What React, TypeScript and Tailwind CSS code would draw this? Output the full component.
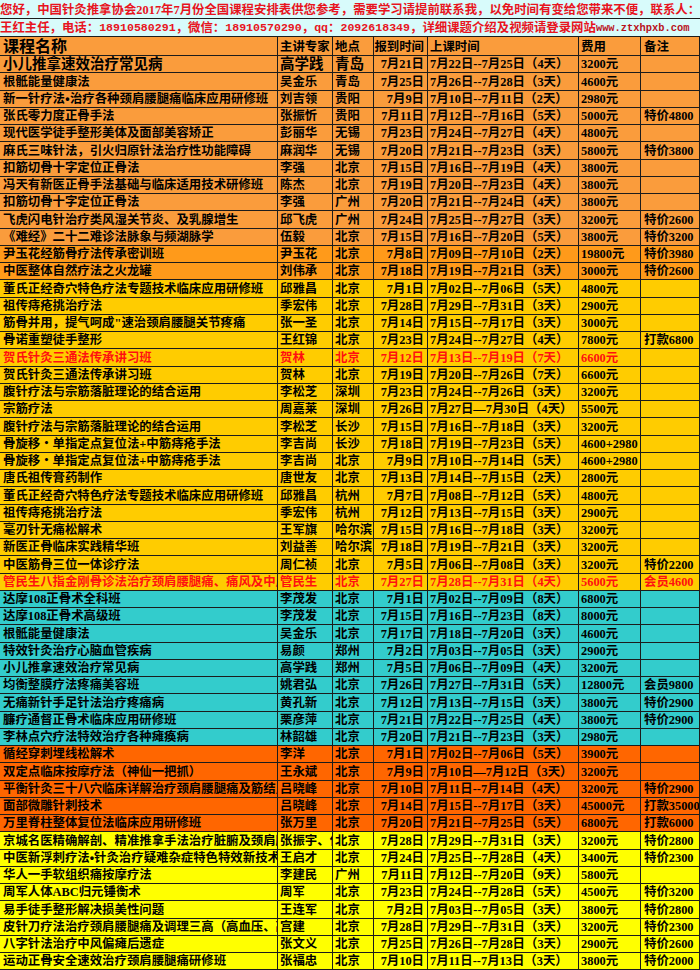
import React from 'react';

// [课程名称, 主讲专家, 地点, 报到时间, 上课时间, 费用, 备注, 红字]
type Row = [string, string, string, string, string, string, string, boolean?];

interface Section {
  bg: string;
  rows: Row[];
}

const sections: Section[] = [
  {
    bg: 'bg-[#fa9c3c]',
    rows: [
      ['小儿推拿速效治疗常见病', '高学践', '青岛', '7月21日', '7月22日--7月25日（4天）', '3200元', ''],
      ['根骶能量健康法', '吴金乐', '青岛', '7月25日', '7月26日--7月28日（3天）', '4600元', ''],
      ['新一针疗法•治疗各种颈肩腰腿痛临床应用研修班', '刘吉领', '贵阳', '7月9日', '7月10日--7月11日（2天）', '2980元', ''],
      ['张氏零力度正骨手法', '张振忻', '贵阳', '7月11日', '7月12日--7月16日（5天）', '5000元', '特价4800'],
      ['现代医学徒手整形美体及面部美容矫正', '彭丽华', '无锡', '7月23日', '7月24日--7月27日（4天）', '4800元', ''],
      ['麻氏三味针法，引火归原针法治疗性功能障碍', '麻润华', '无锡', '7月20日', '7月21日--7月23日（3天）', '5800元', '特价3800'],
      ['扣筋切骨十字定位正骨法', '李强', '北京', '7月15日', '7月16日--7月19日（4天）', '3800元', ''],
      ['冯天有新医正骨手法基础与临床适用技术研修班', '陈杰', '北京', '7月19日', '7月20日--7月23日（4天）', '3800元', ''],
      ['扣筋切骨十字定位正骨法', '李强', '广州', '7月20日', '7月21日--7月24日（4天）', '3800元', ''],
      ['飞虎闪电针治疗类风湿关节炎、及乳腺增生', '邱飞虎', '广州', '7月24日', '7月25日--7月27日（3天）', '3200元', '特价2600'],
      ['《难经》二十二难诊法脉象与频湖脉学', '伍毅', '北京', '7月15日', '7月16日--7月20日（5天）', '3800元', '特价3200'],
    ],
  },
  {
    bg: 'bg-[#ff9a1a]',
    rows: [
      ['尹玉花经筋骨疗法传承密训班', '尹玉花', '北京', '7月8日', '7月09日--7月10日（2天）', '19800元', '特价3980'],
      ['中医整体自然疗法之火龙罐', '刘伟承', '北京', '7月18日', '7月19日--7月21日（3天）', '3000元', '特价2600'],
    ],
  },
  {
    bg: 'bg-[#ffcc00]',
    rows: [
      ['董氏正经奇穴特色疗法专题技术临床应用研修班', '邱雅昌', '北京', '7月1日', '7月02日--7月06日（5天）', '4800元', ''],
      ['祖传痔疮挑治疗法', '季宏伟', '北京', '7月28日', '7月29日--7月31日（3天）', '2900元', ''],
      ['筋骨并用，提气呵成"速治颈肩腰腿关节疼痛', '张一圣', '北京', '7月14日', '7月15日--7月17日（3天）', '3000元', ''],
      ['骨诺重塑徒手整形', '王红锦', '北京', '7月23日', '7月24日--7月27日（4天）', '7800元', '打款6800'],
      ['贺氏针灸三通法传承讲习班', '贺林', '北京', '7月12日', '7月13日--7月19日（7天）', '6600元', '', true],
      ['贺氏针灸三通法传承讲习班', '贺林', '北京', '7月19日', '7月20日--7月26日（7天）', '6600元', ''],
      ['腹针疗法与宗筋落脏理论的结合运用', '李松芝', '深圳', '7月23日', '7月24日--7月26日（3天）', '3200元', ''],
      ['宗筋疗法', '周嘉莱', '深圳', '7月26日', '7月27日—7月30日（4天）', '5500元', ''],
      ['腹针疗法与宗筋落脏理论的结合运用', '李松芝', '长沙', '7月15日', '7月16日--7月18日（3天）', '3200元', ''],
      ['骨旋移・单指定点复位法+中筋痔疮手法', '李吉尚', '长沙', '7月18日', '7月19日--7月23日（5天）', '4600+2980', ''],
      ['骨旋移・单指定点复位法+中筋痔疮手法', '李吉尚', '北京', '7月9日', '7月10日--7月14日（5天）', '4600+2980', ''],
      ['唐氏祖传膏药制作', '唐世友', '北京', '7月13日', '7月14日--7月15日（2天）', '2800元', ''],
      ['董氏正经奇穴特色疗法专题技术临床应用研修班', '邱雅昌', '杭州', '7月7日', '7月08日--7月12日（5天）', '4800元', ''],
      ['祖传痔疮挑治疗法', '季宏伟', '杭州', '7月12日', '7月13日--7月15日（3天）', '2900元', ''],
      ['毫刃针无痛松解术', '王军旗', '哈尔滨', '7月15日', '7月16日--7月18日（3天）', '3200元', ''],
      ['新医正骨临床实践精华班', '刘益善', '哈尔滨', '7月18日', '7月19日--7月21日（3天）', '3200元', ''],
      ['中医筋骨三位一体诊疗法', '周仁祯', '北京', '7月5日', '7月06日--7月08日（3天）', '3200元', '特价2200'],
      ['管民生八指金刚骨诊法治疗颈肩腰腿痛、痛风及中风', '管民生', '北京', '7月27日', '7月28日--7月31日（4天）', '5600元', '会员4600', true],
    ],
  },
  {
    bg: 'bg-[#33cccc]',
    rows: [
      ['达摩108正骨术全科班', '李茂发', '北京', '7月1日', '7月02日--7月09日（8天）', '6800元', ''],
      ['达摩108正骨术高级班', '李茂发', '北京', '7月15日', '7月16日--7月23日（8天）', '8000元', ''],
      ['根骶能量健康法', '吴金乐', '北京', '7月17日', '7月18日--7月20日（3天）', '4600元', ''],
      ['特效针灸治疗心脑血管疾病', '易颜', '郑州', '7月2日', '7月03日--7月05日（3天）', '2900元', ''],
      ['小儿推拿速效治疗常见病', '高学践', '郑州', '7月5日', '7月06日--7月09日（4天）', '3200元', ''],
      ['均衡整膜疗法疼痛美容班', '姚君弘', '北京', '7月26日', '7月27日--7月31日（5天）', '12800元', '会员9800'],
      ['无痛新针手足针法治疗疼痛病', '黄孔新', '北京', '7月12日', '7月13日--7月15日（3天）', '3800元', '特价2900'],
      ['臁疗通督正骨术临床应用研修班', '栗彦萍', '北京', '7月21日', '7月22日--7月25日（4天）', '3800元', '特价2900'],
      ['李林点穴疗法特效治疗各种瘫痪病', '林韶雄', '北京', '7月20日', '7月21日--7月23日（3天）', '2980元', ''],
    ],
  },
  {
    bg: 'bg-[#ff6600]',
    rows: [
      ['循经穿刺埋线松解术', '李洋', '北京', '7月1日', '7月02日--7月06日（5天）', '3900元', ''],
      ['双定点临床按摩疗法（神仙一把抓）', '王永斌', '北京', '7月9日', '7月10日—7月12日（3天）', '3200元', ''],
      ['平衡针灸三十八穴临床详解治疗颈肩腰腿痛及筋结点', '吕晓峰', '北京', '7月10日', '7月11日--7月14日（4天）', '3200元', '特价2900'],
      ['面部微雕针刺技术', '吕晓峰', '北京', '7月14日', '7月15日--7月17日（3天）', '45000元', '打款35000'],
      ['万里脊柱整体复位法临床应用研修班', '张万里', '北京', '7月20日', '7月21日--7月25日（5天）', '6800元', '打款6000'],
    ],
  },
  {
    bg: 'bg-[#ffff00]',
    rows: [
      ['京城名医精确解剖、精准推拿手法治疗脏腑及颈肩腰', '张振宇、付', '北京', '7月28日', '7月29日--7月31日（3天）', '3200元', '特价2800'],
      ['中医新浮刺疗法•针灸治疗疑难杂症特色特效新技术', '王启才', '北京', '7月24日', '7月25日--7月28日（4天）', '3400元', '特价2300'],
      ['华人一手软组织痛按摩疗法', '李建民', '广州', '7月11日', '7月12日--7月20日（9天）', '5800元', ''],
      ['周军人体ABC归元锤衡术', '周军', '北京', '7月23日', '7月24日--7月28日（5天）', '4500元', '特价3200'],
      ['易手徒手整形解决损美性问题', '王连军', '北京', '7月2日', '7月03日--7月05日（3天）', '3800元', '特价2800'],
      ['皮针刀疗法治疗颈肩腰腿痛及调理三高（高血压、高', '宫建', '北京', '7月28日', '7月29日--7月31日（3天）', '3200元', '特价2300'],
      ['八字针法治疗中风偏瘫后遗症', '张文义', '北京', '7月25日', '7月26日--7月28日（3天）', '2900元', '特价2600'],
      ['运动正骨安全速效治疗颈肩腰腿痛研修班', '张福忠', '北京', '7月10日', '7月11日--7月13日（3天）', '3800元', '特价2000'],
    ],
  },
];

// column widths, alignment
const cols = [
  'w-[278px] pl-[3px]',
  'w-[55px] pl-[2px]',
  'w-[41px] pl-[2px]',
  'w-[54px] justify-end pr-[3px]',
  'w-[151px] pl-[2px]',
  'w-[62px] pl-[2px]',
  'w-[59px] pl-[3px]',
];

const cell = 'flex shrink-0 items-end pb-px overflow-hidden whitespace-nowrap border-r border-b border-[#1c1c1c]';

const headers = ['课程名称', '主讲专家', '地点', '报到时间', '上课时间', '费用', '备注'];

// keep the "•" narrow, as in the sheet
const withBullet = (text: string) => {
  const parts = text.split('•');
  if (parts.length === 1) return text;
  return parts.map((p, i) => (
    <React.Fragment key={i}>
      {i > 0 && <span className="inline-flex w-[5px] justify-center font-['Liberation_Sans',sans-serif]">•</span>}
      {p}
    </React.Fragment>
  ));
};

export default function App() {
  return (
    <div className="w-[700px] h-[970px] overflow-hidden bg-white font-['Liberation_Serif','Noto_Sans_CJK_SC',serif] font-bold text-[12.4px] leading-[14px] text-black">
      {/* banner */}
      <div className="h-[19px] flex items-end bg-[#d8fbfb] text-[#e8141e] whitespace-nowrap overflow-hidden border-b border-[#1c1c1c] pb-px">
        您好，中国针灸推拿协会2017年7月份全国课程安排表供您参考，需要学习请提前联系我，以免时间有变给您带来不便，联系人：
      </div>
      <div className="h-[18px] flex items-end bg-[#d8fbfb] text-[#e8141e] whitespace-nowrap overflow-hidden border-b border-[#1c1c1c] pb-px">
        王红主任，电话：<span className="font-['Liberation_Mono',monospace] text-[11.6px]">18910580291</span>，微信：
        <span className="font-['Liberation_Mono',monospace] text-[11.6px]">18910570290</span>，
        <span className="font-['Liberation_Mono',monospace] text-[11.6px]">qq</span>：
        <span className="font-['Liberation_Mono',monospace] text-[11.6px]">2092618349</span>，详细课题介绍及视频请登录网站
        <span className="font-['Liberation_Mono',monospace] text-[10.4px] text-[#b8101a]">www.ztxhpxb.com</span>
      </div>

      {/* column header */}
      <div className="flex h-[19px] bg-[#fa9c3c]">
        {headers.map((h, i) => (
          <div key={h} className={`${cell} ${cols[i]} ${i === 0 ? 'text-[16px]' : 'text-[12.4px]'}`}>
            {h}
          </div>
        ))}
      </div>

      {sections.map((section, si) => (
        <div key={si} className={section.bg}>
          {section.rows.map((row, ri) => {
            const red = row[7];
            const big = si === 0 && ri === 0;
            return (
              <div key={ri} className={`flex h-[17.25px] ${red ? 'text-[#ff1010]' : ''}`}>
                {row.slice(0, 7).map((v, ci) => (
                  <div
                    key={ci}
                    className={`${cell} ${cols[ci]} ${big && ci < 3 ? 'text-[14.5px]' : ''}`}
                  >
                    {ci === 0 ? withBullet(v as string) : (v as string)}
                  </div>
                ))}
              </div>
            );
          })}
        </div>
      ))}
    </div>
  );
}
